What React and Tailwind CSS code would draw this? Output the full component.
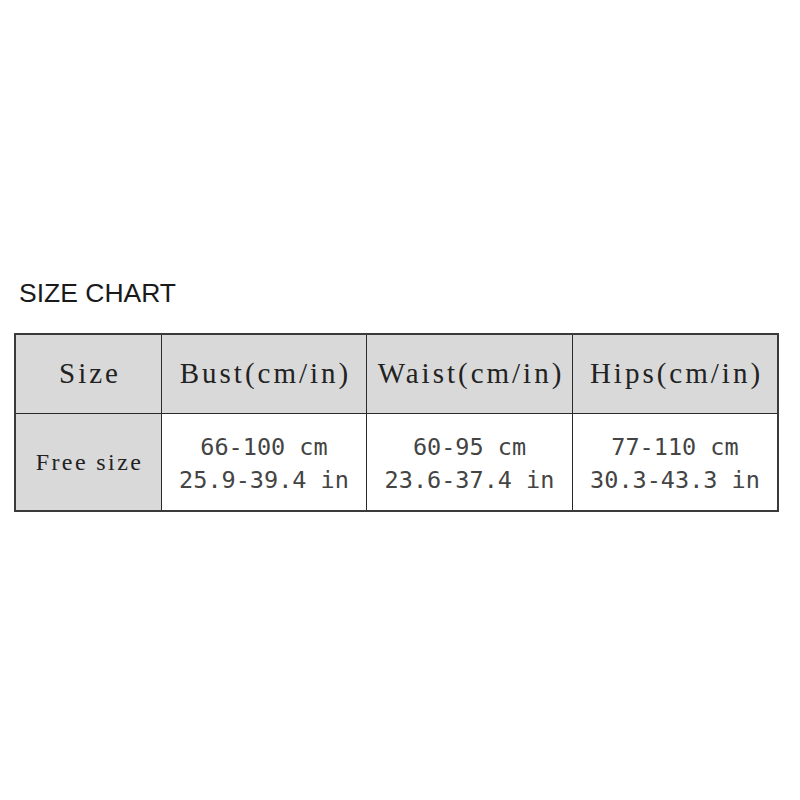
export default function App() {
  const serif = { fontFamily: '"Liberation Serif", "Times New Roman", serif' };
  const mono = { fontFamily: '"DejaVu Sans Mono", "Liberation Mono", monospace' };
  const cols = [
    ["Bust(cm/in)", "66-100 cm", "25.9-39.4 in"],
    ["Waist(cm/in)", "60-95 cm", "23.6-37.4 in"],
    ["Hips(cm/in)", "77-110 cm", "30.3-43.3 in"],
  ];
  return (
    <div className="w-[800px] h-[800px] bg-white pl-[14px] pt-[278px]">
      <div
        className="pl-[5px] text-[26.5px] leading-[30px] text-[#1a1a1a]"
        style={{ fontFamily: '"Liberation Sans", Arial, sans-serif' }}
      >
        SIZE CHART
      </div>
      <div className="mt-[25px] w-[765px] border-2 border-[#3a3a3a] grid grid-cols-[146px_205px_206px_204px] grid-rows-[79px_96px] text-[#222]">
        <div className="bg-[#d9d9d9] border-r border-b border-[#2a2a2a] flex items-center justify-center">
          <span className="text-[29px] tracking-[3px] pl-[3px]" style={serif}>Size</span>
        </div>
        {cols.map((c, i) => (
          <div
            key={c[0]}
            className={
              i < 2
                ? "bg-[#d9d9d9] border-r border-b border-[#2a2a2a] flex items-center justify-center"
                : "bg-[#d9d9d9] border-b border-[#2a2a2a] flex items-center justify-center"
            }
          >
            <span className="text-[29px] tracking-[3px] pl-[3px]" style={serif}>{c[0]}</span>
          </div>
        ))}
        <div className="bg-[#d9d9d9] border-r border-[#2a2a2a] flex items-center justify-center">
          <span className="text-[24px] tracking-[2.4px] pl-[2px]" style={serif}>Free size</span>
        </div>
        {cols.map((c, i) => (
          <div
            key={c[1]}
            className={
              i < 2
                ? "bg-white border-r border-[#2a2a2a] flex flex-col items-center justify-center pt-[3px]"
                : "bg-white flex flex-col items-center justify-center pt-[3px]"
            }
          >
            <span className="text-[23.5px] leading-[33px] text-[#444]" style={mono}>{c[1]}</span>
            <span className="text-[23.5px] leading-[33px] text-[#444]" style={mono}>{c[2]}</span>
          </div>
        ))}
      </div>
    </div>
  );
}
